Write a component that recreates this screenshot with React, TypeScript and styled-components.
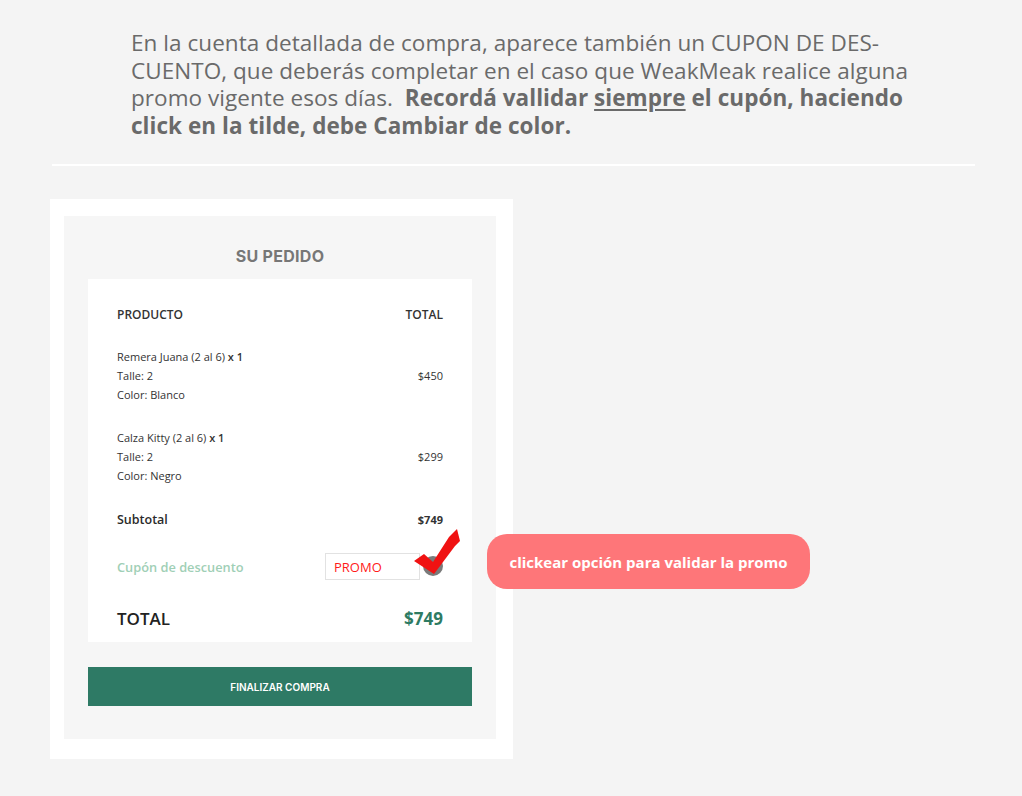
import React from "react";
import styled, { createGlobalStyle } from "styled-components";

const Global = createGlobalStyle`
  html, body { margin: 0; padding: 0; background: #f4f4f4; }
  body { font-family: "Open Sans", "Liberation Sans", sans-serif; }
`;

const Page = styled.div`
  width: 1022px;
  min-height: 796px;
  padding-top: 29px;
  box-sizing: border-box;
`;

const Intro = styled.p`
  margin: 0 0 0 131px;
  width: 820px;
  font-size: 22.5px;
  line-height: 27.5px;
  font-weight: 500;
  color: #6a6a6a;
  letter-spacing: 0.05px;
  b { font-weight: 700; }
  u { text-decoration-thickness: 1.5px; text-underline-offset: 3px; }
`;

const Divider = styled.hr`
  margin: 25px 47px 0 52px;
  border: 0;
  height: 2px;
  background: #ffffff;
`;

const Stage = styled.div`
  position: relative;
  margin-top: 33px;
  padding-left: 50px;
`;

const Card = styled.div`
  width: 463px;
  box-sizing: border-box;
  background: #ffffff;
  padding: 17px 17px 20px 14px;
`;

const Panel = styled.div`
  background: #f6f6f6;
  padding: 0 24px 33px;
`;

const Heading = styled.h2`
  margin: 0;
  padding: 30px 0 12px;
  text-align: center;
  font-family: Inter, "Liberation Sans", sans-serif;
  font-size: 16px;
  line-height: 21px;
  font-weight: 700;
  letter-spacing: 0.3px;
  color: #777777;
`;

const Table = styled.div`
  background: #ffffff;
  padding: 26px 29px 12px;
  color: #2b2b2b;
`;

const Row = styled.div<{ $align?: string; $mt?: number }>`
  display: flex;
  justify-content: space-between;
  align-items: ${(p) => p.$align || "center"};
  margin-top: ${(p) => p.$mt ?? 0}px;
`;

const HeadCell = styled.span`
  font-size: 12px;
  font-weight: 600;
  line-height: 20px;
  color: #333;
`;

const Item = styled.div`
  font-size: 11px;
  line-height: 19px;
  color: #333;
`;

const Qty = styled.span`
  font-weight: 600;
`;

const Price = styled.span<{ $bold?: boolean }>`
  font-size: 11px;
  font-weight: ${(p) => (p.$bold ? 700 : 400)};
  color: #333;
`;

const Label = styled.span`
  font-size: 12.5px;
  font-weight: 600;
  color: #2b2b2b;
`;

const CouponLabel = styled.span`
  font-size: 12.8px;
  font-weight: 600;
  color: #9fcfb6;
`;

const CouponField = styled.div`
  position: relative;
  display: flex;
  align-items: center;
  margin-right: 23px;
`;

const CouponInput = styled.div`
  width: 95px;
  height: 27px;
  box-sizing: border-box;
  border: 1px solid #e2e2e2;
  padding: 0 8px;
  display: flex;
  align-items: center;
  font-size: 13px;
  color: #ff1a1a;
`;

const Check = styled.svg`
  position: absolute;
  left: 86px;
  top: -25px;
`;

const TotalLabel = styled.span`
  font-size: 17px;
  font-weight: 600;
  color: #222;
`;

const TotalValue = styled.span`
  font-size: 17px;
  font-weight: 700;
  color: #2e7b63;
`;

const Button = styled.div`
  margin-top: 25px;
  height: 39px;
  background: #2e7a65;
  color: #ffffff;
  display: flex;
  align-items: center;
  justify-content: center;
  font-family: Inter, "Liberation Sans", sans-serif;
  font-size: 10px;
  font-weight: 600;
`;

const Callout = styled.div`
  position: absolute;
  left: 487px;
  top: 335px;
  width: 323px;
  height: 55px;
  border-radius: 20px;
  background: #fe7679;
  color: #ffffff;
  display: flex;
  align-items: center;
  justify-content: center;
  font-size: 15px;
  font-weight: 700;
`;

export default function App() {
  return (
    <Page>
      <Global />
      <Intro>
        En la cuenta detallada de compra, aparece también un CUPON DE DES-
        <br />
        CUENTO, que deberás completar en el caso que WeakMeak realice alguna
        <br />
        promo vigente esos días.&nbsp; <b>Recordá vallidar <u>siempre</u> el cupón, haciendo</b>
        <br />
        <b>click en la tilde, debe Cambiar de color.</b>
      </Intro>
      <Divider />
      <Stage>
        <Card>
          <Panel>
            <Heading>SU PEDIDO</Heading>
            <Table>
              <Row>
                <HeadCell>PRODUCTO</HeadCell>
                <HeadCell>TOTAL</HeadCell>
              </Row>
              <Row $mt={22}>
                <Item>
                  Remera Juana (2 al 6) <Qty>x 1</Qty>
                  <br />
                  Talle: 2
                  <br />
                  Color: Blanco
                </Item>
                <Price>$450</Price>
              </Row>
              <Row $mt={24}>
                <Item>
                  Calza Kitty (2 al 6) <Qty>x 1</Qty>
                  <br />
                  Talle: 2
                  <br />
                  Color: Negro
                </Item>
                <Price>$299</Price>
              </Row>
              <Row $mt={26}>
                <Label>Subtotal</Label>
                <Price $bold>$749</Price>
              </Row>
              <Row $mt={25}>
                <CouponLabel>Cupón de descuento</CouponLabel>
                <CouponField>
                  <CouponInput>PROMO</CouponInput>
                  <Check width="50" height="50" viewBox="0 0 50 50">
                    <circle cx="22" cy="38" r="10" fill="#7a7a7a" />
                    <path
                      d="M3 33 L13 26 L22 34 L38 9 L46 1 L49 13 L44 18 L23 46 Z"
                      fill="#f01212"
                    />
                  </Check>
                </CouponField>
              </Row>
              <Row $mt={27}>
                <TotalLabel>TOTAL</TotalLabel>
                <TotalValue>$749</TotalValue>
              </Row>
            </Table>
            <Button>FINALIZAR COMPRA</Button>
          </Panel>
        </Card>
        <Callout>clickear opción para validar la promo</Callout>
      </Stage>
    </Page>
  );
}
